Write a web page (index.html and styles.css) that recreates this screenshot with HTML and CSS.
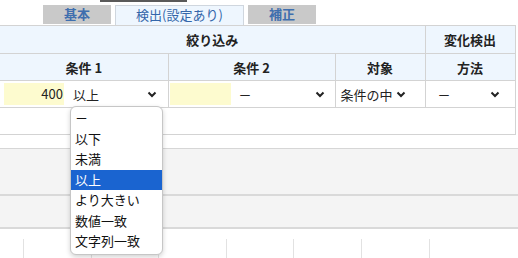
FILE: index.html
```html
<!DOCTYPE html>
<html lang="ja">
<head>
  <meta charset="UTF-8">
  <title>検出設定</title>
  <link rel="stylesheet" href="styles.css">
</head>
<body>
  <div class="topbar"></div>

  <div class="tabs">
    <div class="tab">基本</div>
    <div class="tab active">検出(設定あり)</div>
    <div class="tab">補正</div>
  </div>

  <table class="cond-table">
    <colgroup>
      <col class="c1">
      <col class="c2">
      <col class="c3">
      <col class="c4">
    </colgroup>
    <tr class="head head1">
      <th colspan="3">絞り込み</th>
      <th>変化検出</th>
    </tr>
    <tr class="head">
      <th>条件 1</th>
      <th>条件 2</th>
      <th>対象</th>
      <th>方法</th>
    </tr>
    <tr class="data">
      <td>
        <div class="pair first">
          <div class="num">400</div>
          <div class="sel wide"><span>以上</span><svg width="10" height="7" viewBox="0 0 10 7"><path d="M1.5 1.5l3.5 3.5 3.5-3.5" fill="none" stroke="#222" stroke-width="2"/></svg></div>
        </div>
      </td>
      <td>
        <div class="pair second">
          <div class="num"></div>
          <div class="sel wide"><span>－</span><svg width="10" height="7" viewBox="0 0 10 7"><path d="M1.5 1.5l3.5 3.5 3.5-3.5" fill="none" stroke="#222" stroke-width="2"/></svg></div>
        </div>
      </td>
      <td>
        <div class="sel target"><span>条件の中</span><svg width="10" height="7" viewBox="0 0 10 7"><path d="M1.5 1.5l3.5 3.5 3.5-3.5" fill="none" stroke="#222" stroke-width="2"/></svg></div>
      </td>
      <td>
        <div class="sel method"><span>－</span><svg width="10" height="7" viewBox="0 0 10 7"><path d="M1.5 1.5l3.5 3.5 3.5-3.5" fill="none" stroke="#222" stroke-width="2"/></svg></div>
      </td>
    </tr>
    <tr class="empty">
      <td colspan="4"></td>
    </tr>
  </table>

  <div class="panel">
    <div class="band tall"></div>
    <div class="band"></div>
  </div>

  <div class="cols">
    <div></div><div></div><div></div><div></div>
    <div></div><div></div><div></div>
  </div>

  <ul class="popup">
    <li>－</li>
    <li>以下</li>
    <li>未満</li>
    <li class="selected">以上</li>
    <li>より大きい</li>
    <li>数値一致</li>
    <li>文字列一致</li>
  </ul>
</body>
</html>
```

FILE: styles.css
```css
body {
  margin: 0;
  font-family: "Noto Sans CJK JP", "Noto Sans", sans-serif;
  font-size: 13px;
  color: #222;
  background-color: #fff;
  width: 518px;
  height: 258px;
  overflow: hidden;
  position: relative;
}
.topbar {
  margin-left: 100px;
  width: 87px;
  height: 2px;
  background-color: #5a5a5a;
}
.tabs {
  display: flex;
  gap: 4px;
  margin: 3px 0 0 43px;
  height: 20px;
}
.tab {
  width: 68px;
  height: 19px;
  line-height: 18px;
  text-align: center;
  background-color: #c9c9c9;
  color: #3f6fae;
  font-weight: bold;
}
.tab.active {
  width: 127px;
  height: 19px;
  background-color: #eef6fe;
  border: 1px solid #cfd6de;
  border-bottom: none;
  font-weight: normal;
  color: #3466aa;
}
.cond-table {
  border-collapse: collapse;
  table-layout: fixed;
  width: 515px;
}
.c1 { width: 168px; }
.c2 { width: 167px; }
.c3 { width: 90px; }
.c4 { width: 90px; }
.cond-table th,
.cond-table td {
  border: 1px solid #d3d3d3;
  padding: 0;
}
.cond-table tr > :first-child {
  border-left: none;
}
.head th {
  background-color: #eef6fe;
  font-weight: bold;
  height: 26px;
  text-align: center;
}
.head1 th {
  height: 27px;
}
.data td {
  height: 26px;
}
.empty td {
  height: 26px;
}
.pair {
  display: flex;
  align-items: center;
}
.pair.first {
  padding-left: 4px;
  gap: 2px;
}
.pair.second {
  padding-left: 1px;
  gap: 3px;
}
.num {
  width: 60px;
  height: 22px;
  line-height: 22px;
  background-color: #fdfbcf;
  text-align: right;
  padding-right: 1px;
  box-sizing: border-box;
}
.pair.second .num {
  width: 61px;
}
.sel {
  display: flex;
  align-items: center;
  justify-content: space-between;
  height: 22px;
  padding: 0 7px;
}
.sel.wide {
  width: 98px;
  box-sizing: border-box;
}
.pair.second .sel {
  padding-left: 5px;
}
.sel.target {
  justify-content: flex-start;
  gap: 3px;
  padding-left: 5px;
}
.sel.method {
  padding: 0 15px 0 12px;
}
.panel {
  margin-top: 13px;
  background-color: #f4f4f4;
  border-top: 1px solid #d6d6d6;
}
.band {
  height: 31px;
  border-bottom: 2px solid #d9d9d9;
}
.band.tall {
  height: 45px;
}
.cols {
  display: flex;
  margin: 10px 0 0 23px;
  height: 30px;
  overflow: hidden;
}
.cols div {
  width: 67.6px;
  border-left: 1px solid #e2e2e2;
  box-sizing: border-box;
  flex-shrink: 0;
}
.popup {
  position: absolute;
  left: 70px;
  top: 106px;
  width: 91px;
  margin: 0;
  padding: 1px 0 2px;
  list-style: none;
  background-color: #fff;
  border: 1px solid #c6c6c6;
  border-radius: 6px;
  box-shadow: 0 2px 5px rgba(0, 0, 0, 0.18);
  overflow: hidden;
}
.popup li {
  height: 20.5px;
  line-height: 20.5px;
  padding-left: 4px;
  color: #111;
}
.popup li.selected {
  background-color: #1a64d0;
  color: #fff;
}
```
